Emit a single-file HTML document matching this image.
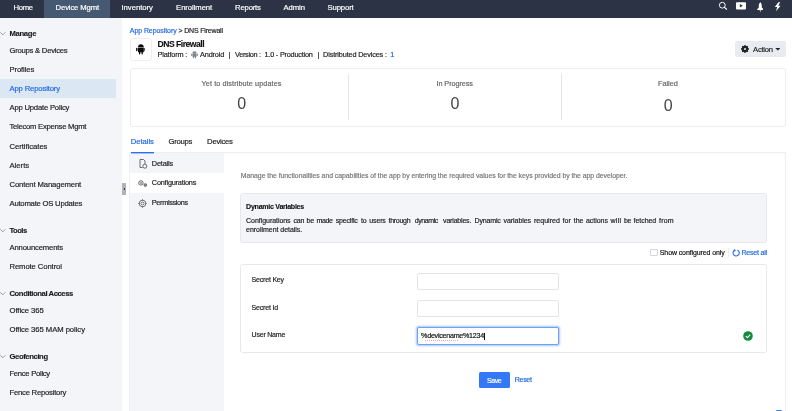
<!DOCTYPE html>
<html><head><meta charset="utf-8">
<style>
*{box-sizing:border-box;margin:0;padding:0}
html,body{width:792px;height:411px;overflow:hidden;background:#fff}
body{font-family:"Liberation Sans",sans-serif;font-size:7.6px;color:#222;position:relative;-webkit-text-stroke:0.18px}
.abs{position:absolute;white-space:nowrap}
.chev{position:absolute;left:0.3px;width:5.6px;height:3.2px}
.num{-webkit-text-stroke:0;font-size:16px;line-height:18px;color:#444;width:40px;text-align:center}
#w{position:absolute;left:0;top:0;width:792px;height:411px;will-change:transform;opacity:0.999}
</style></head><body><div id="w">

<!-- top nav -->
<div class="abs" style="left:0;top:0;width:792px;height:17.6px;background:#2b3344"></div>
<div class="abs" style="left:44.2px;top:0;width:66.1px;height:17.6px;background:#465972"></div>
<svg class="abs" style="left:718px;top:1.1px" width="10" height="10" viewBox="0 0 10 10"><circle cx="4.3" cy="4.2" r="2.9" fill="none" stroke="#fff" stroke-width="0.95"/><path d="M6.5 6.4L8.6 8.2" stroke="#fff" stroke-width="1.2" stroke-linecap="round"/></svg>
<svg class="abs" style="left:736.4px;top:2.3px" width="10" height="8" viewBox="0 0 10 8"><rect x="0" y="0.2" width="10" height="7.2" rx="1" fill="#fff"/><path d="M3.9 2L6.9 3.8L3.9 5.6Z" fill="#2b3344"/></svg>
<svg class="abs" style="left:756.6px;top:1.5px" width="6.6" height="10.6" viewBox="0 0 7 11"><path d="M3.5 0.2C4.7 1.2 5.1 2.6 5.1 4.2V5.8L6.8 7.6V8.3H0.2V7.6L1.9 5.8V4.2C1.9 2.6 2.3 1.2 3.5 0.2Z" fill="#fff"/><path d="M2.8 8.7H4.2L3.5 10.8Z" fill="#fff"/></svg>
<svg class="abs" style="left:774px;top:1.8px" width="8" height="10" viewBox="0 0 8 10"><path d="M4.4 0.2L0.8 5H3.2L2 9.2L6.6 3.8H4.2L6.2 0.2Z" fill="#fff"/></svg>

<!-- sidebar -->
<div class="abs" style="left:0;top:17.6px;width:121.8px;height:394px;background:#f3f5f9"></div>
<div class="abs" style="left:0;top:79px;width:116.2px;height:18.7px;background:#dce7f4"></div>
<svg class="chev" style="top:31.9px" viewBox="0 0 5.6 3.2"><path d="M0.3 0.3L2.8 2.8L5.3 0.3" fill="none" stroke="#555" stroke-width="0.55"/></svg>
<svg class="chev" style="top:229px" viewBox="0 0 5.6 3.2"><path d="M0.3 0.3L2.8 2.8L5.3 0.3" fill="none" stroke="#555" stroke-width="0.55"/></svg>
<svg class="chev" style="top:292.2px" viewBox="0 0 5.6 3.2"><path d="M0.3 0.3L2.8 2.8L5.3 0.3" fill="none" stroke="#555" stroke-width="0.55"/></svg>
<svg class="chev" style="top:354.9px" viewBox="0 0 5.6 3.2"><path d="M0.3 0.3L2.8 2.8L5.3 0.3" fill="none" stroke="#555" stroke-width="0.55"/></svg>
<div class="abs" style="left:122.1px;top:182.8px;width:3.8px;height:12.4px;background:#b0b2b8;border-radius:0.5px"></div><div class="abs" style="left:123.5px;top:188.2px;width:1.2px;height:1.6px;background:#3a3d45"></div>

<!-- header -->
<div class="abs" style="left:129.6px;top:38px;width:22.2px;height:23px;border:1px solid #eceef1;border-radius:3px;background:#fff"></div>
<svg class="abs" style="left:135.7px;top:44px" width="9.8" height="10.8" viewBox="0 0 10 11"><path d="M2 3.3C2 1.5 3.3 0.3 5 0.3C6.7 0.3 8 1.5 8 3.3Z M2 3.8H8V7.8Q8 8.5 7.3 8.5H2.7Q2 8.5 2 7.8Z M0.1 4.4Q0.1 3.7 0.8 3.7Q1.5 3.7 1.5 4.4V6.6Q1.5 7.3 0.8 7.3Q0.1 7.3 0.1 6.6Z M8.5 4.4Q8.5 3.7 9.2 3.7Q9.9 3.7 9.9 4.4V6.6Q9.9 7.3 9.2 7.3Q8.5 7.3 8.5 6.6Z M3 8.3H4.4V10Q4.4 10.7 3.7 10.7Q3 10.7 3 10Z M5.6 8.3H7V10Q7 10.7 6.3 10.7Q5.6 10.7 5.6 10Z" fill="#0a0a0a"/></svg>
<svg class="abs" style="left:191px;top:51.1px" width="7" height="7.6" viewBox="0 0 10 11"><path d="M2 3.3C2 1.5 3.3 0.3 5 0.3C6.7 0.3 8 1.5 8 3.3Z M2 3.8H8V7.8Q8 8.5 7.3 8.5H2.7Q2 8.5 2 7.8Z M0.1 4.4Q0.1 3.7 0.8 3.7Q1.5 3.7 1.5 4.4V6.6Q1.5 7.3 0.8 7.3Q0.1 7.3 0.1 6.6Z M8.5 4.4Q8.5 3.7 9.2 3.7Q9.9 3.7 9.9 4.4V6.6Q9.9 7.3 9.2 7.3Q8.5 7.3 8.5 6.6Z M3 8.3H4.4V10Q4.4 10.7 3.7 10.7Q3 10.7 3 10Z M5.6 8.3H7V10Q7 10.7 6.3 10.7Q5.6 10.7 5.6 10Z" fill="#7d828c"/></svg>

<div class="abs" style="left:735.3px;top:41.4px;width:50.5px;height:15.4px;background:#e9ebf0;border-radius:2px"></div>
<svg class="abs" style="left:741.1px;top:45.3px" width="8" height="8" viewBox="0 0 8 8"><circle cx="4" cy="4" r="2.4" fill="none" stroke="#222" stroke-width="1.6"/><g stroke="#222" stroke-width="1.3"><path d="M4 0V8M0 4H8M1.2 1.2L6.8 6.8M6.8 1.2L1.2 6.8"/></g><circle cx="4" cy="4" r="1" fill="#e9ebf0"/></svg>
<svg class="abs" style="left:774.6px;top:48.4px" width="5.6" height="2.6" viewBox="0 0 6 3"><path d="M0 0H6L3 3Z" fill="#222"/></svg>

<!-- stats -->
<div class="abs" style="left:129.6px;top:68px;width:656.2px;height:58.5px;border:1px solid #eceef1;border-radius:2px;background:#fff"></div>
<div class="abs" style="left:348px;top:74px;width:1px;height:46px;background:#e4e6ea"></div>
<div class="abs" style="left:561px;top:74px;width:1px;height:46px;background:#e4e6ea"></div>
<span class="abs num" style="left:221.7px;top:95.1px">0</span>
<span class="abs num" style="left:434.9px;top:95.1px">0</span>
<span class="abs num" style="left:648.1px;top:96.9px">0</span>

<!-- tabs -->
<div class="abs" style="left:130px;top:152px;width:656px;height:1px;background:#eceef1"></div>

<!-- panel -->
<div class="abs" style="left:785px;top:153px;width:1px;height:260px;background:#eceef2"></div>
<div class="abs" style="left:129.3px;top:153.2px;width:1px;height:260px;background:#eef0f3"></div>
<div class="abs" style="left:130.3px;top:153.2px;width:94px;height:260px;background:#f3f5f9"></div>
<div class="abs" style="left:130.3px;top:172.8px;width:94px;height:20px;background:#fff"></div>
<div class="abs" style="left:130.5px;top:152px;width:23.6px;height:2px;background:linear-gradient(to bottom,#2c6ef0 0,#2c6ef0 50%,rgba(44,110,240,.4) 50%,rgba(44,110,240,.4) 100%)"></div>
<svg class="abs" style="left:138.5px;top:159.2px" width="9" height="10" viewBox="0 0 9 10"><path d="M1 0.5H4.5L6 2V5M1 0.5V8.5H3.5" fill="none" stroke="#333" stroke-width="0.7"/><circle cx="5.8" cy="7.2" r="2" fill="none" stroke="#333" stroke-width="0.7"/></svg>
<svg class="abs" style="left:138.2px;top:180px" width="10" height="8" viewBox="0 0 10 8"><circle cx="2.9" cy="2.9" r="2.2" fill="none" stroke="#444" stroke-width="0.8"/><circle cx="2.9" cy="2.9" r="0.8" fill="none" stroke="#444" stroke-width="0.5"/><circle cx="7.3" cy="5.1" r="1.8" fill="#6a6d73"/><circle cx="7.3" cy="5.1" r="0.5" fill="#ddd"/></svg>
<svg class="abs" style="left:138.4px;top:198.7px" width="9" height="9" viewBox="0 0 9 9"><circle cx="4.5" cy="4.5" r="3.3" fill="none" stroke="#333" stroke-width="0.65"/><circle cx="4.5" cy="4.5" r="1.5" fill="none" stroke="#333" stroke-width="0.6"/><path d="M4.5 0.3V1.4M4.5 7.6V8.7M0.3 4.5H1.4M7.6 4.5H8.7" stroke="#333" stroke-width="0.7"/></svg>

<div class="abs" style="left:240.2px;top:193px;width:526.5px;height:49.6px;background:#f3f5f9;border:1px solid #e6e8ec;border-radius:2.5px"></div>

<div class="abs" style="left:650px;top:248.5px;width:7.6px;height:7.4px;border:1px solid #d3d6db;border-radius:1px;background:#fff"></div>
<div class="abs" style="left:728.2px;top:248px;width:1px;height:9px;background:#eceef2"></div>
<svg class="abs" style="left:732px;top:248.5px" width="8.4" height="8" viewBox="0 0 8.4 8"><path d="M5.25 1A3.1 3.1 0 1 1 2.85 1.1" fill="none" stroke="#2a6eea" stroke-width="1.1"/><path d="M1.9 0.1L4 1.2L2.4 2.7Z" fill="#2a6eea"/></svg>

<div class="abs" style="left:240.4px;top:264px;width:526.2px;height:89px;background:#fff;border:1px solid #e6e8ec;border-radius:2.5px"></div>
<div class="abs" style="left:417px;top:273px;width:142.4px;height:17px;border:1px solid #e3e5e9;border-radius:2px;background:#fff"></div>
<div class="abs" style="left:417px;top:300px;width:142.4px;height:17px;border:1px solid #e3e5e9;border-radius:2px;background:#fff"></div>
<div class="abs" style="left:417px;top:327px;width:142.4px;height:17.6px;border:1px solid #6aa2f7;border-radius:2px;background:#fff;box-shadow:0 0 2px 0.3px rgba(60,130,245,.45)"></div>
<div class="abs" style="left:424.5px;top:339.6px;width:33px;height:0;border-bottom:0.7px dotted rgba(240,90,90,.55)"></div>
<div class="abs" style="left:484.4px;top:333.2px;width:0.6px;height:6.8px;background:#111"></div>
<svg class="abs" style="left:743.2px;top:330.5px" width="10" height="10" viewBox="0 0 10 10"><circle cx="5" cy="5" r="4.8" fill="#158a3c"/><path d="M2.8 5.1L4.4 6.6L7.2 3.6" fill="none" stroke="#fff" stroke-width="1.1"/></svg>

<div class="abs" style="left:479px;top:371.8px;width:30.7px;height:16px;background:#3478f6;border-radius:1.5px"></div>
<div class="abs" style="left:775.8px;top:409.6px;width:6.2px;height:3px;background:#3b7df5;border-radius:1px 1px 0 0"></div>

<span id="n1" class="abs" style="left:13.48px;top:2.60px;font-size:7.7px;line-height:10px;font-weight:normal;color:#fff;letter-spacing:-0.317px">Home</span>
<span id="n2" class="abs" style="left:55.58px;top:2.60px;font-size:7.7px;line-height:10px;font-weight:normal;color:#fff;letter-spacing:-0.137px">Device Mgmt</span>
<span id="n3" class="abs" style="left:121.48px;top:2.60px;font-size:7.7px;line-height:10px;font-weight:normal;color:#fff;letter-spacing:-0.020px">Inventory</span>
<span id="n4" class="abs" style="left:176.08px;top:2.60px;font-size:7.7px;line-height:10px;font-weight:normal;color:#fff;letter-spacing:-0.070px">Enrollment</span>
<span id="n5" class="abs" style="left:235.08px;top:2.60px;font-size:7.7px;line-height:10px;font-weight:normal;color:#fff;letter-spacing:-0.182px">Reports</span>
<span id="n6" class="abs" style="left:283.48px;top:2.60px;font-size:7.7px;line-height:10px;font-weight:normal;color:#fff;letter-spacing:-0.070px">Admin</span>
<span id="n7" class="abs" style="left:327.48px;top:2.60px;font-size:7.7px;line-height:10px;font-weight:normal;color:#fff;letter-spacing:-0.113px">Support</span>
<span id="b1" class="abs" style="left:129.81px;top:26.00px;font-size:7.0px;line-height:10px;font-weight:normal;color:#2068e2;letter-spacing:-0.078px">App Repository</span>
<span id="b2" class="abs" style="left:178.51px;top:26.00px;font-size:7.0px;line-height:10px;font-weight:normal;color:#222;letter-spacing:-0.179px">&gt; DNS Firewall</span>
<span id="h1" class="abs" style="left:157.53px;top:38.80px;font-size:8.6px;line-height:10px;font-weight:bold;-webkit-text-stroke:0.12px;color:#111;letter-spacing:-0.492px">DNS Firewall</span>
<span id="p1" class="abs" style="left:157.60px;top:50.20px;font-size:7.3px;line-height:10px;font-weight:normal;color:#222;letter-spacing:-0.173px">Platform :</span>
<span id="p2" class="abs" style="left:200.00px;top:50.20px;font-size:7.3px;line-height:10px;font-weight:normal;color:#222;letter-spacing:-0.150px">Android</span>
<span id="p3" class="abs" style="left:228.60px;top:50.20px;font-size:7.3px;line-height:10px;font-weight:normal;color:#222;letter-spacing:-0.803px">|</span>
<span id="p4" class="abs" style="left:235.10px;top:50.20px;font-size:7.3px;line-height:10px;font-weight:normal;color:#222;letter-spacing:-0.311px">Version :</span>
<span id="p5" class="abs" style="left:264.50px;top:50.20px;font-size:7.3px;line-height:10px;font-weight:normal;color:#222;letter-spacing:-0.207px">1.0 - Production</span>
<span id="p6" class="abs" style="left:317.60px;top:50.20px;font-size:7.3px;line-height:10px;font-weight:normal;color:#222;letter-spacing:-0.803px">|</span>
<span id="p7" class="abs" style="left:323.10px;top:50.20px;font-size:7.3px;line-height:10px;font-weight:normal;color:#222;letter-spacing:-0.149px">Distributed Devices :</span>
<span id="p8" class="abs" style="left:390.30px;top:50.20px;font-size:7.3px;line-height:10px;font-weight:normal;color:#2068e2;letter-spacing:-0.659px">1</span>
<span id="a1" class="abs" style="left:753.08px;top:44.80px;font-size:7.6px;line-height:10px;font-weight:normal;color:#222;letter-spacing:-0.246px">Action</span>
<span id="s1" class="abs" style="left:201.50px;top:78.50px;font-size:7.3px;line-height:10px;font-weight:normal;color:#666;letter-spacing:0.083px">Yet to distribute updates</span>
<span id="s2" class="abs" style="left:436.50px;top:78.50px;font-size:7.3px;line-height:10px;font-weight:normal;color:#666;letter-spacing:-0.083px">In Progress</span>
<span id="s3" class="abs" style="left:658.10px;top:78.50px;font-size:7.3px;line-height:10px;font-weight:normal;color:#666;letter-spacing:-0.045px">Failed</span>
<span id="t1" class="abs" style="left:130.78px;top:136.80px;font-size:7.7px;line-height:10px;font-weight:normal;color:#2068e2;letter-spacing:-0.050px">Details</span>
<span id="t2" class="abs" style="left:168.48px;top:136.80px;font-size:7.7px;line-height:10px;font-weight:normal;color:#222;letter-spacing:-0.262px">Groups</span>
<span id="t3" class="abs" style="left:207.08px;top:136.80px;font-size:7.7px;line-height:10px;font-weight:normal;color:#222;letter-spacing:-0.242px">Devices</span>
<span id="u1" class="abs" style="left:151.80px;top:158.70px;font-size:7.3px;line-height:10px;font-weight:normal;color:#222;letter-spacing:-0.173px">Details</span>
<span id="u2" class="abs" style="left:151.80px;top:178.40px;font-size:7.3px;line-height:10px;font-weight:normal;color:#222;letter-spacing:-0.190px">Configurations</span>
<span id="u3" class="abs" style="left:151.80px;top:198.10px;font-size:7.3px;line-height:10px;font-weight:normal;color:#222;letter-spacing:-0.332px">Permissions</span>
<span id="m1" class="abs" style="left:240.82px;top:171.20px;font-size:6.9px;line-height:10px;font-weight:normal;color:#777;letter-spacing:-0.044px">Manage the functionalities and capabilities of the app by entering the required values for the keys provided by the app developer.</span>
<span id="d1" class="abs" style="left:246.11px;top:201.50px;font-size:7.1px;line-height:10px;font-weight:bold;-webkit-text-stroke:0.12px;color:#111;letter-spacing:-0.290px">Dynamic Variables</span>
<span id="w0" class="abs" style="left:246.12px;top:216.30px;font-size:7.0px;line-height:10px;font-weight:normal;color:#222;letter-spacing:-0.048px">Configurations</span>
<span id="w1" class="abs" style="left:293.62px;top:216.30px;font-size:7.0px;line-height:10px;font-weight:normal;color:#222;letter-spacing:-0.242px">can</span>
<span id="w2" class="abs" style="left:306.51px;top:216.30px;font-size:7.0px;line-height:10px;font-weight:normal;color:#222;letter-spacing:-0.213px">be</span>
<span id="w3" class="abs" style="left:316.62px;top:216.30px;font-size:7.0px;line-height:10px;font-weight:normal;color:#222;letter-spacing:-0.386px">made</span>
<span id="w4" class="abs" style="left:335.81px;top:216.30px;font-size:7.0px;line-height:10px;font-weight:normal;color:#222;letter-spacing:-0.197px">specific</span>
<span id="w5" class="abs" style="left:361.12px;top:216.30px;font-size:7.0px;line-height:10px;font-weight:normal;color:#222;letter-spacing:-0.187px">to</span>
<span id="w6" class="abs" style="left:369.31px;top:216.30px;font-size:7.0px;line-height:10px;font-weight:normal;color:#222;letter-spacing:-0.151px">users</span>
<span id="w7" class="abs" style="left:388.51px;top:216.30px;font-size:7.0px;line-height:10px;font-weight:normal;color:#222;letter-spacing:-0.269px">through</span>
<span id="w8" class="abs" style="left:414.81px;top:216.30px;font-size:7.0px;line-height:10px;font-weight:normal;color:#222;letter-spacing:-0.430px">dynamic</span>
<span id="w9" class="abs" style="left:443.12px;top:216.30px;font-size:7.0px;line-height:10px;font-weight:normal;color:#222;letter-spacing:-0.190px">variables.</span>
<span id="w10" class="abs" style="left:474.51px;top:216.30px;font-size:7.0px;line-height:10px;font-weight:normal;color:#222;letter-spacing:-0.152px">Dynamic</span>
<span id="w11" class="abs" style="left:503.51px;top:216.30px;font-size:7.0px;line-height:10px;font-weight:normal;color:#222;letter-spacing:-0.050px">variables</span>
<span id="w12" class="abs" style="left:534.02px;top:216.30px;font-size:7.0px;line-height:10px;font-weight:normal;color:#222;letter-spacing:0.023px">required</span>
<span id="w13" class="abs" style="left:562.42px;top:216.30px;font-size:7.0px;line-height:10px;font-weight:normal;color:#222;letter-spacing:0.133px">for</span>
<span id="w14" class="abs" style="left:573.82px;top:216.30px;font-size:7.0px;line-height:10px;font-weight:normal;color:#222;letter-spacing:-0.121px">the</span>
<span id="w15" class="abs" style="left:586.02px;top:216.30px;font-size:7.0px;line-height:10px;font-weight:normal;color:#222;letter-spacing:-0.045px">actions</span>
<span id="w16" class="abs" style="left:610.62px;top:216.30px;font-size:7.0px;line-height:10px;font-weight:normal;color:#222;letter-spacing:0.209px">will</span>
<span id="w17" class="abs" style="left:624.02px;top:216.30px;font-size:7.0px;line-height:10px;font-weight:normal;color:#222;letter-spacing:-0.313px">be</span>
<span id="w18" class="abs" style="left:633.62px;top:216.30px;font-size:7.0px;line-height:10px;font-weight:normal;color:#222;letter-spacing:-0.057px">fetched</span>
<span id="w19" class="abs" style="left:659.02px;top:216.30px;font-size:7.0px;line-height:10px;font-weight:normal;color:#222;letter-spacing:0.167px">from</span>
<span id="d3" class="abs" style="left:246.12px;top:225.20px;font-size:7.0px;line-height:10px;font-weight:normal;color:#222;letter-spacing:-0.039px">enrollment details.</span>
<span id="c1" class="abs" style="left:659.82px;top:247.80px;font-size:7.0px;line-height:10px;font-weight:normal;color:#111;letter-spacing:-0.108px">Show configured only</span>
<span id="c2" class="abs" style="left:741.52px;top:247.80px;font-size:7.0px;line-height:10px;font-weight:normal;color:#2068e2;letter-spacing:-0.207px">Reset all</span>
<span id="f1" class="abs" style="left:251.62px;top:275.10px;font-size:7.0px;line-height:10px;font-weight:normal;color:#222;letter-spacing:-0.198px">Secret Key</span>
<span id="f2" class="abs" style="left:251.62px;top:302.70px;font-size:7.0px;line-height:10px;font-weight:normal;color:#222;letter-spacing:-0.194px">Secret Id</span>
<span id="f3" class="abs" style="left:251.62px;top:329.90px;font-size:7.0px;line-height:10px;font-weight:normal;color:#222;letter-spacing:-0.215px">User Name</span>
<span id="i3" class="abs" style="left:421.11px;top:331.30px;font-size:7.1px;line-height:10px;font-weight:normal;color:#111;letter-spacing:-0.242px">%devicename%1234</span>
<span id="sv" class="abs" style="left:487.01px;top:375.80px;font-size:7.1px;line-height:10px;font-weight:normal;color:#fff;letter-spacing:-0.523px">Save</span>
<span id="rs" class="abs" style="left:514.81px;top:375.10px;font-size:7.1px;line-height:10px;font-weight:normal;color:#2068e2;letter-spacing:-0.350px">Reset</span>
<span id="sd0" class="abs" style="left:9.48px;top:28.90px;font-size:7.7px;line-height:10px;font-weight:bold;-webkit-text-stroke:0.12px;color:#1a1a1a;letter-spacing:-0.330px">Manage</span>
<span id="sd1" class="abs" style="left:9.48px;top:45.70px;font-size:7.7px;line-height:10px;font-weight:normal;color:#222;letter-spacing:-0.250px">Groups &amp; Devices</span>
<span id="sd2" class="abs" style="left:9.48px;top:64.80px;font-size:7.7px;line-height:10px;font-weight:normal;color:#222;letter-spacing:-0.124px">Profiles</span>
<span id="sd3" class="abs" style="left:9.48px;top:84.00px;font-size:7.7px;line-height:10px;font-weight:normal;color:#2068e2;letter-spacing:-0.151px">App Repository</span>
<span id="sd4" class="abs" style="left:9.48px;top:103.10px;font-size:7.7px;line-height:10px;font-weight:normal;color:#222;letter-spacing:-0.206px">App Update Policy</span>
<span id="sd5" class="abs" style="left:9.48px;top:122.20px;font-size:7.7px;line-height:10px;font-weight:normal;color:#222;letter-spacing:-0.264px">Telecom Expense Mgmt</span>
<span id="sd6" class="abs" style="left:9.48px;top:141.60px;font-size:7.7px;line-height:10px;font-weight:normal;color:#222;letter-spacing:-0.042px">Certificates</span>
<span id="sd7" class="abs" style="left:9.48px;top:160.80px;font-size:7.7px;line-height:10px;font-weight:normal;color:#222;letter-spacing:-0.002px">Alerts</span>
<span id="sd8" class="abs" style="left:9.48px;top:180.00px;font-size:7.7px;line-height:10px;font-weight:normal;color:#222;letter-spacing:-0.127px">Content Management</span>
<span id="sd9" class="abs" style="left:9.48px;top:199.40px;font-size:7.7px;line-height:10px;font-weight:normal;color:#222;letter-spacing:-0.220px">Automate OS Updates</span>
<span id="sd10" class="abs" style="left:9.48px;top:226.10px;font-size:7.7px;line-height:10px;font-weight:bold;-webkit-text-stroke:0.12px;color:#1a1a1a;letter-spacing:-0.558px">Tools</span>
<span id="sd11" class="abs" style="left:9.48px;top:243.00px;font-size:7.7px;line-height:10px;font-weight:normal;color:#222;letter-spacing:-0.163px">Announcements</span>
<span id="sd12" class="abs" style="left:9.48px;top:262.00px;font-size:7.7px;line-height:10px;font-weight:normal;color:#222;letter-spacing:-0.100px">Remote Control</span>
<span id="sd13" class="abs" style="left:9.48px;top:288.90px;font-size:7.7px;line-height:10px;font-weight:bold;-webkit-text-stroke:0.12px;color:#1a1a1a;letter-spacing:-0.423px">Conditional Access</span>
<span id="sd14" class="abs" style="left:9.48px;top:305.90px;font-size:7.7px;line-height:10px;font-weight:normal;color:#222;letter-spacing:-0.066px">Office 365</span>
<span id="sd15" class="abs" style="left:9.48px;top:324.90px;font-size:7.7px;line-height:10px;font-weight:normal;color:#222;letter-spacing:-0.063px">Office 365 MAM policy</span>
<span id="sd16" class="abs" style="left:9.48px;top:351.80px;font-size:7.7px;line-height:10px;font-weight:bold;-webkit-text-stroke:0.12px;color:#1a1a1a;letter-spacing:-0.405px">Geofencing</span>
<span id="sd17" class="abs" style="left:9.48px;top:369.00px;font-size:7.7px;line-height:10px;font-weight:normal;color:#222;letter-spacing:-0.297px">Fence Policy</span>
<span id="sd18" class="abs" style="left:9.48px;top:388.10px;font-size:7.7px;line-height:10px;font-weight:normal;color:#222;letter-spacing:-0.225px">Fence Repository</span>
</div></body></html>
